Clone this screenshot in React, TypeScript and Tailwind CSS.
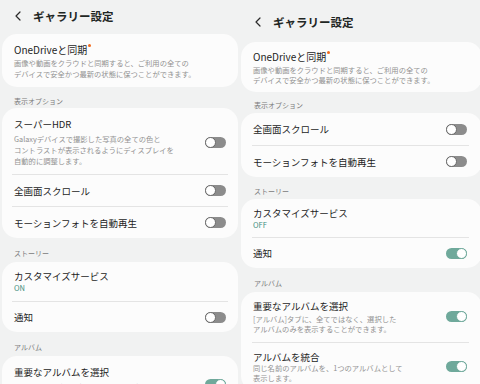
import React from "react";

type Sw = "on" | "off";

function Toggle({ state }: { state: Sw }) {
  if (state === "on") {
    return (
      <div className="flex h-[11px] w-[21px] shrink-0 items-center justify-end rounded-full bg-[#6fa99b]">
        <div className="h-[11px] w-[11px] rounded-full border-[1.5px] border-[#6fa99b] bg-white" />
      </div>
    );
  }
  return (
    <div className="flex h-[11px] w-[21px] shrink-0 items-center rounded-full bg-[#8c8c8c]">
      <div className="h-[11px] w-[11px] rounded-full border-[1.5px] border-[#6a6a6a] bg-white" />
    </div>
  );
}

function Chevron() {
  return (
    <svg width="6" height="10" viewBox="0 0 6 10" className="shrink-0">
      <path d="M5 1 L1 5 L5 9" fill="none" stroke="#2a2a2a" strokeWidth="1.2" strokeLinecap="round" strokeLinejoin="round" />
    </svg>
  );
}

function Header({ cls }: { cls: string }) {
  return (
    <div className={`flex items-center pl-[15px] ${cls}`}>
      <Chevron />
      <div className="ml-[12px] text-[11.5px] font-bold leading-[14px] text-[#1f2624]">ギャラリー設定</div>
    </div>
  );
}

function Section({ label, cls }: { label: string; cls: string }) {
  return <div className={`pl-[14px] text-[7px] leading-[8px] text-[#7a7a7a] ${cls}`}>{label}</div>;
}

function Divider({ right }: { right?: boolean }) {
  return <div className={right ? "ml-[11px] mr-[13px] h-px bg-[#e4e4e4]" : "mx-[10px] h-px bg-[#e4e4e4]"} />;
}

function Card({ right, children }: { right?: boolean; children: React.ReactNode }) {
  return (
    <div className={right ? "ml-[1px] w-[241px] rounded-[15px] bg-[#fcfcfc]" : "mx-[2px] rounded-[15px] bg-[#fcfcfc]"}>
      {children}
    </div>
  );
}

function Row({ title, h, sw, right }: { title: string; h: string; sw?: Sw; right?: boolean }) {
  return (
    <div className={`flex items-center justify-between pl-[12px] ${right ? "pr-[15px]" : "pr-[12px]"} ${h}`}>
      <div className="text-[9.5px] leading-[14px] text-[#1c1c1c]">{title}</div>
      {sw && <Toggle state={sw} />}
    </div>
  );
}

function Item({
  title,
  lines,
  sub,
  sw,
  right,
  pad,
  gap,
  lh,
}: {
  title: React.ReactNode;
  lines?: string[];
  sub?: string;
  sw?: Sw;
  right?: boolean;
  pad: string;
  gap?: string;
  lh?: string;
}) {
  return (
    <div className={`flex items-center justify-between pl-[12px] ${right ? "pr-[15px]" : "pr-[12px]"} ${pad}`}>
      <div className="flex flex-col whitespace-nowrap">
        <div className="flex items-start text-[9.5px] leading-[14px] text-[#1c1c1c]">{title}</div>
        {sub && <div className="text-[7.5px] leading-[10px] text-[#3e8e7e]">{sub}</div>}
        {lines && (
          <div className={`text-[7.3px] text-[#929292] ${gap ?? ""} ${lh ?? "leading-[11px]"}`}>
            {lines.map((l) => (
              <div key={l}>{l}</div>
            ))}
          </div>
        )}
      </div>
      {sw && <Toggle state={sw} />}
    </div>
  );
}

const oneDrive = (
  <>
    <span className="text-[10px]">OneDriveと同期</span>
    <span className="ml-[1px] mt-[1px] h-[3px] w-[3px] rounded-full bg-[#f26a1b]" />
  </>
);
const oneDriveLines = ["画像や動画をクラウドと同期すると、ご利用の全ての", "デバイスで安全かつ最新の状態に保つことができます。"];

export default function App() {
  return (
    <div className="flex h-[384px] w-[480px] overflow-hidden bg-[#f1f2f2] font-['Noto_Sans_CJK_JP',sans-serif]">
      {/* left screen */}
      <div className="w-[240px] shrink-0">
        <Header cls="h-[32px]" />
        <div className="mt-[2px]">
          <Card>
            <Item title={oneDrive} lines={oneDriveLines} pad="pt-[9px] pb-[7px]" gap="mt-[1px]" />
          </Card>
        </div>
        <Section label="表示オプション" cls="pt-[10px] pb-[3px]" />
        <Card>
          <Item
            title="スーパーHDR"
            lines={["Galaxyデバイスで撮影した写真の全ての色と", "コントラストが表示されるようにディスプレイを", "自動的に調整します。"]}
            sw="off"
            pad="pt-[9px] pb-[7px]"
            gap="mt-[3px]"
          />
          <Divider />
          <Row title="全画面スクロール" h="h-[31px]" sw="off" />
          <Divider />
          <Row title="モーションフォトを自動再生" h="h-[31px]" sw="off" />
        </Card>
        <Section label="ストーリー" cls="pt-[11px] pb-[5px]" />
        <Card>
          <Item title="カスタマイズサービス" sub="ON" pad="pt-[7px] pb-[8px]" />
          <Divider />
          <Row title="通知" h="h-[30px]" sw="off" />
        </Card>
        <Section label="アルバム" cls="pt-[11px] pb-[5px]" />
        <Card>
          <Item
            title="重要なアルバムを選択"
            lines={["[アルバム]タブに、全てではなく、選択した", "アルバムのみを表示することができます。"]}
            sw="on"
            pad="pt-[9px] pb-[8px]"
            gap="mt-[3px]"
          />
        </Card>
      </div>

      {/* right screen */}
      <div className="w-[240px] shrink-0">
        <Header cls="h-[42px] pt-[2px]" />
        <Card right>
          <Item title={oneDrive} lines={oneDriveLines} right pad="pt-[8px] pb-[7px]" gap="mt-[1px]" lh="leading-[10px]" />
        </Card>
        <Section label="表示オプション" cls="pt-[9px] pb-[4px]" />
        <Card right>
          <Row title="全画面スクロール" h="h-[32px]" sw="off" right />
          <Divider right />
          <Row title="モーションフォトを自動再生" h="h-[31px]" sw="off" right />
        </Card>
        <Section label="ストーリー" cls="pt-[10px] pb-[4px]" />
        <Card right>
          <Item title="カスタマイズサービス" sub="OFF" right pad="pt-[7px] pb-[7px]" />
          <Divider right />
          <Row title="通知" h="h-[30px]" sw="on" right />
        </Card>
        <Section label="アルバム" cls="pt-[11px] pb-[5px]" />
        <Card right>
          <Item
            title="重要なアルバムを選択"
            lines={["[アルバム]タブに、全てではなく、選択した", "アルバムのみを表示することができます。"]}
            sw="on"
            right
            pad="pt-[7px] pb-[8px]"
            gap="mt-[1px]"
            lh="leading-[10px]"
          />
          <Divider right />
          <Item
            title="アルバムを統合"
            lines={["同じ名前のアルバムを、1つのアルバムとして", "表示します。"]}
            sw="on"
            right
            pad="pt-[7px] pb-[8px]"
            gap="mt-[-1px]"
            lh="leading-[10px]"
          />
        </Card>
      </div>
    </div>
  );
}
